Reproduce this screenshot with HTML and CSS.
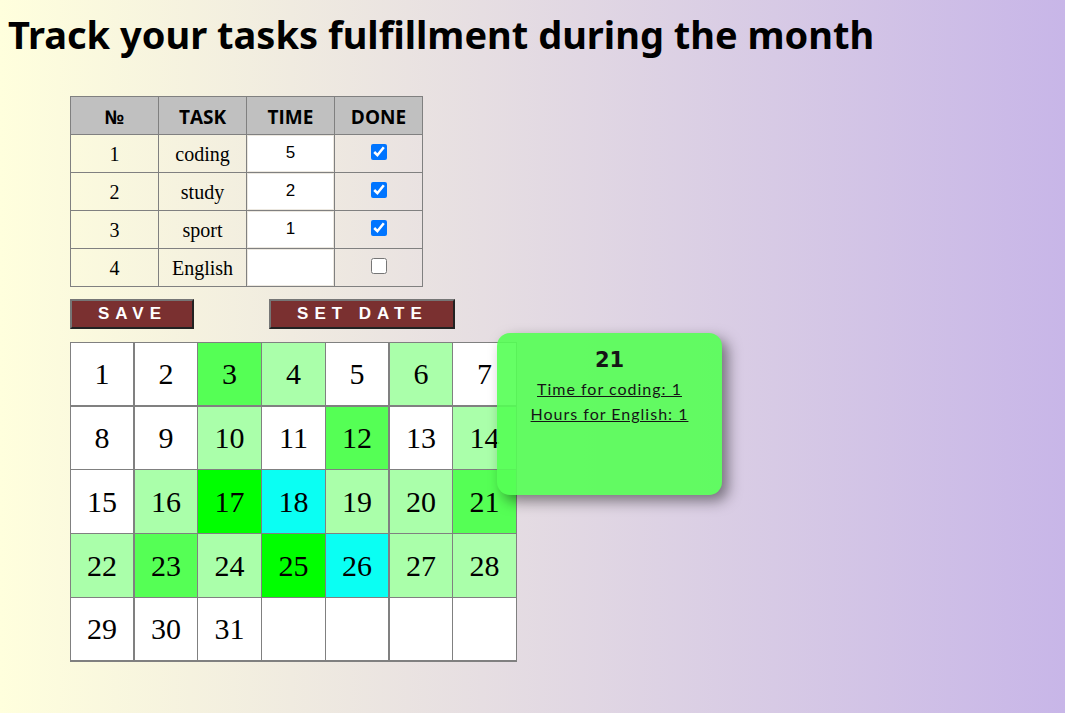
FILE: index.html
```html
<!DOCTYPE html>
<html lang="en">
<head>
<meta charset="utf-8">
<title>Task tracker</title>
<link rel="stylesheet" href="styles.css">
</head>
<body>
<h1 class="title">Track your tasks fulfillment during the month</h1>
<main class="tracker">
<table class="tasks">
<thead><tr><th scope="col">№</th><th scope="col">TASK</th><th scope="col">TIME</th><th scope="col">DONE</th></tr></thead>
<tbody>
<tr><td>1</td><td>coding</td><td><input class="time" type="text" aria-label="Time for coding" value="5"></td><td><input class="done" type="checkbox" aria-label="coding done" checked></td></tr>
<tr><td>2</td><td>study</td><td><input class="time" type="text" aria-label="Time for study" value="2"></td><td><input class="done" type="checkbox" aria-label="study done" checked></td></tr>
<tr><td>3</td><td>sport</td><td><input class="time" type="text" aria-label="Time for sport" value="1"></td><td><input class="done" type="checkbox" aria-label="sport done" checked></td></tr>
<tr><td>4</td><td>English</td><td><input class="time" type="text" aria-label="Time for English"></td><td><input class="done" type="checkbox" aria-label="English done"></td></tr>
</tbody>
</table>
<div class="actions">
<button class="action" type="button">SAVE</button>
<button class="action" type="button">SET DATE</button>
</div>
<div class="month">
<table class="calendar">
<colgroup><col class="narrow"><col><col><col><col class="narrow"><col><col></colgroup>
<tbody>
<tr class="short"><td>1</td><td>2</td><td class="mid">3</td><td class="low">4</td><td>5</td><td class="low">6</td><td>7</td></tr>
<tr><td>8</td><td>9</td><td class="low">10</td><td>11</td><td class="mid">12</td><td>13</td><td class="low">14</td></tr>
<tr><td>15</td><td class="low">16</td><td class="high">17</td><td class="top">18</td><td class="low">19</td><td class="low">20</td><td class="mid">21</td></tr>
<tr><td class="low">22</td><td class="mid">23</td><td class="low">24</td><td class="high">25</td><td class="top">26</td><td class="low">27</td><td class="low">28</td></tr>
<tr><td>29</td><td>30</td><td>31</td><td></td><td></td><td></td><td></td></tr>
</tbody>
</table>
<aside class="details">
<h2 class="details-day">21</h2>
<p class="details-line">Time for coding: 1</p>
<p class="details-line">Hours for English: 1</p>
</aside>
</div>
</main>
</body>
</html>
```
FILE: styles.css
```css
html {
  min-height: 100%;
  background: linear-gradient(to right, #ffffdd, #c8b6e8);
}

body {
  margin: 8px;
}

.title {
  margin: 0;
  font: bold 38px/52px "Noto Sans", "Open Sans", sans-serif;
}

.tracker {
  margin: 36px 62px 0;
}

.tasks {
  width: 353px;
  table-layout: fixed;
  border-collapse: collapse;
  font: 20px/24px "Liberation Serif", serif;
  text-align: center;
}

.tasks th,
.tasks td {
  box-sizing: border-box;
  height: 38px;
  padding: 0;
  border: 1px solid #808080;
}

.tasks th {
  padding-top: 2px;
  background: #c0c0c0;
  font: bold 19px/24px "Open Sans", "Noto Sans", sans-serif;
}

.time {
  display: block;
  box-sizing: border-box;
  width: 100%;
  height: 37px;
  padding: 0 2px 2px;
  border: 1px solid #ece8e0;
  background: #fff;
  font: 17px "Liberation Sans", Arial, sans-serif;
  text-align: center;
}

.done {
  display: block;
  width: 16px;
  height: 16px;
  margin: 0 auto 3px;
}

.actions {
  display: flex;
  gap: 75px;
  margin-top: 12px;
}

.action {
  height: 30px;
  padding: 0 25px 0 26px;
  border: 2px solid;
  border-color: #767676 #222 #222 #767676;
  background: #7a3030;
  color: #fff;
  font: bold 17px/24px "Liberation Sans", Arial, sans-serif;
  letter-spacing: 6px;
}

.month {
  position: relative;
  width: 447px;
  margin-top: 13px;
}

.calendar {
  width: 100%;
  table-layout: fixed;
  border-spacing: 0;
  border-right: 1px solid #808080;
  border-bottom: 2px solid #808080;
  font: 30px/34px "Liberation Serif", serif;
  text-align: center;
}

.calendar col {
  width: 64px;
}

.calendar .narrow {
  width: 63px;
}

.calendar td {
  box-sizing: border-box;
  height: 64px;
  padding: 0;
  border: solid #808080;
  border-width: 1px 0 0 1px;
  background: #fff;
}

.calendar .short td,
.calendar tr:last-child td {
  height: 63px;
}

.calendar .short + tr td {
  border-top-width: 2px;
}

.calendar td:nth-child(4n + 2) {
  border-left-width: 2px;
}

.calendar .low {
  background: #aaffaa;
}

.calendar .mid {
  background: #55ff55;
}

.calendar .high {
  background: #00ff00;
}

.calendar .top {
  background: #0afff3;
}

.details {
  position: absolute;
  top: -9px;
  left: 427px;
  box-sizing: border-box;
  width: 225px;
  height: 162px;
  padding: 14px 8px;
  border-radius: 13px;
  background: #55ff55;
  box-shadow: 6px 6px 14px #00000080;
  opacity: 0.9;
  text-align: center;
}

.details-day {
  margin: 0 0 2px;
  font: bold 21px/27px "DejaVu Sans", sans-serif;
}

.details-line {
  margin: 0;
  font: 16px/25px Lato, "Open Sans", sans-serif;
  letter-spacing: 1px;
  text-decoration: underline;
}
```
